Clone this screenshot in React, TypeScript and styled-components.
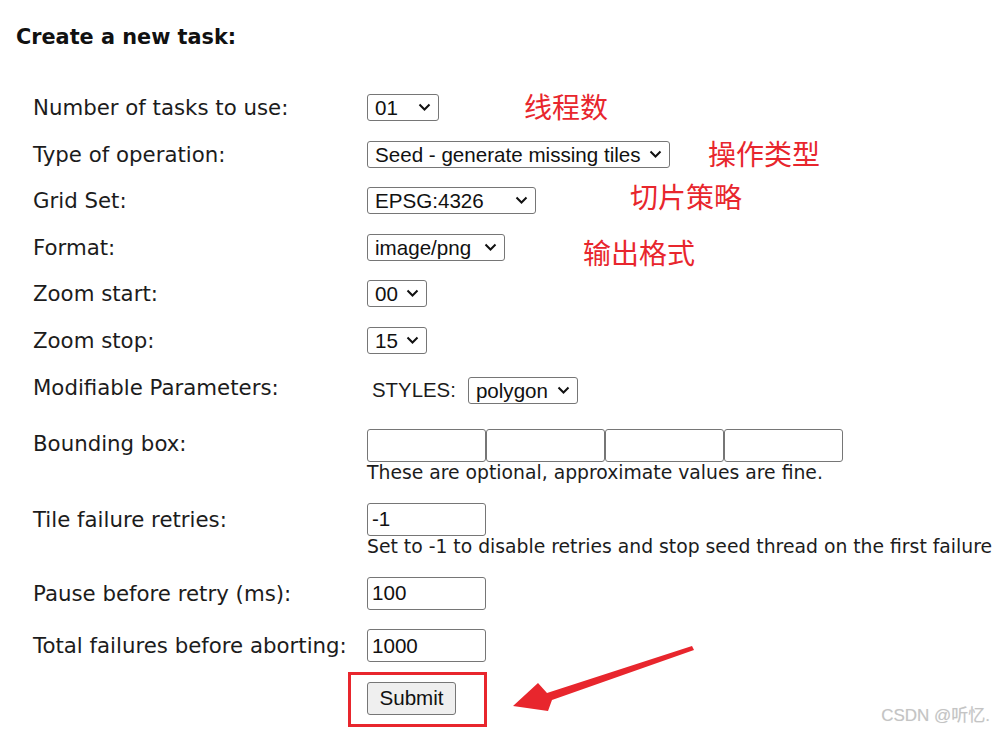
import React from 'react';
import styled, { createGlobalStyle } from 'styled-components';

const GlobalStyle = createGlobalStyle`
    html, body {
        margin: 0;
        padding: 0;
        background: #fff;
    }
    body {
        font-family: "DejaVu Sans", Verdana, sans-serif;
        color: #1c1c1c;
    }
`;

const Page = styled.div`
    position: relative;
    width: 996px;
    height: 732px;
    overflow: hidden;
    box-sizing: border-box;
    padding: 25px 0 0 16px;
`;

const Heading = styled.h3`
    margin: 0;
    font-size: 20.8px;
    line-height: 24px;
    font-weight: bold;
    color: #111;
`;

const Form = styled.form`
    display: grid;
    grid-template-columns: 334px auto;
    row-gap: 19.5px;
    margin: 45px 0 0 17px;
`;

const Label = styled.label<{ $h: number }>`
    font-size: 21.3px;
    line-height: ${(p) => p.$h}px;
    white-space: nowrap;
`;

const Cell = styled.div<{ $pad?: string }>`
    display: flex;
    flex-direction: column;
    align-items: flex-start;
    padding: ${(p) => p.$pad || '0'};
`;

const Inline = styled.div`
    display: flex;
    align-items: center;
    gap: 12px;
    padding-left: 5px;
`;

const ParamName = styled.span`
    font-family: "Liberation Sans", Arial, sans-serif;
    font-size: 20.4px;
`;

const SelectWrap = styled.div<{ $w: number }>`
    position: relative;
    width: ${(p) => p.$w}px;
    height: 27px;
`;

const NativeSelect = styled.select`
    appearance: none;
    width: 100%;
    height: 100%;
    box-sizing: border-box;
    margin: 0;
    padding: 0 0 0 7px;
    border: 1px solid #767676;
    border-radius: 3px;
    background: #fff;
    color: #111;
    font-family: "Liberation Sans", Arial, sans-serif;
    font-size: 20.6px;
    line-height: 25px;
`;

const Chevron = styled.svg`
    position: absolute;
    right: 8px;
    top: 9px;
    width: 13px;
    height: 9px;
    pointer-events: none;
`;

const TextInput = styled.input`
    width: 119px;
    height: 33px;
    box-sizing: border-box;
    margin: 0;
    padding: 0 4px;
    border: 1px solid #767676;
    border-radius: 3px;
    font-family: "Liberation Sans", Arial, sans-serif;
    font-size: 20.6px;
    color: #111;
    background: #fff;
`;

const BoxRow = styled.div`
    display: flex;
`;

const Hint = styled.div`
    font-size: 18.8px;
    line-height: 21.5px;
    white-space: nowrap;
`;

const SubmitButton = styled.button`
    width: 89px;
    height: 33px;
    margin: 0;
    padding: 0;
    border: 1px solid #767676;
    border-radius: 3px;
    background: #efefef;
    color: #111;
    font-family: "Liberation Sans", Arial, sans-serif;
    font-size: 20.6px;
`;

const Note = styled.span<{ $x: number; $y: number }>`
    position: absolute;
    left: ${(p) => p.$x}px;
    top: ${(p) => p.$y}px;
    font-family: "Noto Sans CJK SC", sans-serif;
    font-size: 28px;
    line-height: 32px;
    color: #e8262d;
    white-space: nowrap;
`;

const Overlay = styled.svg`
    position: absolute;
    left: 0;
    top: 0;
    width: 996px;
    height: 732px;
    pointer-events: none;
`;

const Watermark = styled.span`
    position: absolute;
    right: 6px;
    bottom: 6px;
    font-family: "Liberation Sans", "Noto Sans CJK SC", sans-serif;
    font-size: 17px;
    color: #c4c4c4;
    text-shadow: 0 0 1px #e6e6e6;
`;

const Select = ({ width, value }: { width: number; value: string }) => (
    <SelectWrap $w={width}>
        <NativeSelect defaultValue={value}>
            <option>{value}</option>
        </NativeSelect>
        <Chevron viewBox="0 0 13 9">
            <path d="M1.5 1.5 L6.5 6.5 L11.5 1.5" fill="none" stroke="#111" strokeWidth="2" />
        </Chevron>
    </SelectWrap>
);

export default function App() {
    return (
        <>
            <GlobalStyle />
            <Page>
                <Heading>Create a new task:</Heading>
                <Form onSubmit={(e) => e.preventDefault()}>
                    <Label $h={27}>Number of tasks to use:</Label>
                    <Cell>
                        <Select width={72} value="01" />
                    </Cell>

                    <Label $h={27}>Type of operation:</Label>
                    <Cell>
                        <Select width={303} value="Seed - generate missing tiles" />
                    </Cell>

                    <Label $h={27}>Grid Set:</Label>
                    <Cell>
                        <Select width={169} value="EPSG:4326" />
                    </Cell>

                    <Label $h={27}>Format:</Label>
                    <Cell>
                        <Select width={138} value="image/png" />
                    </Cell>

                    <Label $h={27}>Zoom start:</Label>
                    <Cell>
                        <Select width={60} value="00" />
                    </Cell>

                    <Label $h={27}>Zoom stop:</Label>
                    <Cell>
                        <Select width={60} value="15" />
                    </Cell>

                    <Label $h={29}>Modifiable Parameters:</Label>
                    <Cell $pad="3.5px 0 5.5px">
                        <Inline>
                            <ParamName>STYLES:</ParamName>
                            <Select width={110} value="polygon" />
                        </Inline>
                    </Cell>

                    <Label $h={30}>Bounding box:</Label>
                    <Cell>
                        <BoxRow>
                            <TextInput />
                            <TextInput />
                            <TextInput />
                            <TextInput />
                        </BoxRow>
                        <Hint>These are optional, approximate values are fine.</Hint>
                    </Cell>

                    <Label $h={33}>Tile failure retries:</Label>
                    <Cell>
                        <TextInput defaultValue="-1" />
                        <Hint>Set to -1 to disable retries and stop seed thread on the first failure</Hint>
                    </Cell>

                    <Label $h={33}>Pause before retry (ms):</Label>
                    <Cell>
                        <TextInput defaultValue="100" />
                    </Cell>

                    <Label $h={33}>Total failures before aborting:</Label>
                    <Cell>
                        <TextInput defaultValue="1000" />
                    </Cell>

                    <span />
                    <Cell>
                        <SubmitButton type="submit">Submit</SubmitButton>
                    </Cell>
                </Form>

                <Note $x={524} $y={90}>线程数</Note>
                <Note $x={708} $y={137}>操作类型</Note>
                <Note $x={630} $y={180}>切片策略</Note>
                <Note $x={583} $y={236}>输出格式</Note>

                <Overlay viewBox="0 0 996 732">
                    <rect x="349.5" y="673.5" width="136" height="52" fill="none" stroke="#e8262d" strokeWidth="3" />
                    <polygon
                        points="513,706 538,683 547,693 692,646 694,650 552,700 548,711"
                        fill="#e8262d"
                    />
                </Overlay>

                <Watermark>CSDN @听忆.</Watermark>
            </Page>
        </>
    );
}
